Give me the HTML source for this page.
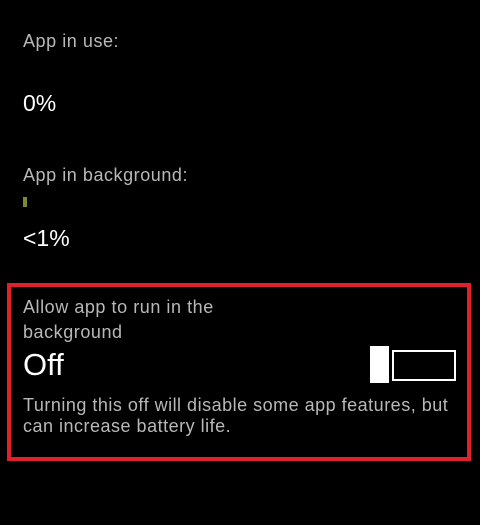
<!DOCTYPE html>
<html><head><style>
body{margin:0;width:480px;height:525px;background:#000;position:relative;overflow:hidden;font-family:"Liberation Sans",sans-serif}
.t{position:absolute;left:23px;white-space:nowrap}
.g{color:#b8b8b8;font-size:18px;letter-spacing:0.55px}
.w{color:#fff;font-size:23px}
</style></head><body>
<div class="t g" style="top:31px">App in use:</div>
<div class="t w" style="top:90px">0%</div>
<div class="t g" style="top:165px">App in background:</div>
<div style="position:absolute;left:23px;top:197px;width:4px;height:10px;background:#7d8a2e"></div>
<div class="t w" style="top:225px">&lt;1%</div>
<div style="position:absolute;left:7px;top:283px;width:456px;height:170px;border:4px solid #e0202a"></div>
<div class="t g" style="top:297px">Allow app to run in the</div>
<div class="t g" style="top:322px">background</div>
<div class="t" style="top:347px;color:#fff;font-size:31px">Off</div>
<div style="position:absolute;left:370px;top:346px;width:19px;height:37px;background:#fff"></div>
<div style="position:absolute;left:392px;top:350px;width:60px;height:27px;border:2px solid #fff"></div>
<div class="t g" style="top:395px;letter-spacing:0.5px">Turning this off will disable some app features, but</div>
<div class="t g" style="top:416px;letter-spacing:0.5px">can increase battery life.</div>
</body></html>
